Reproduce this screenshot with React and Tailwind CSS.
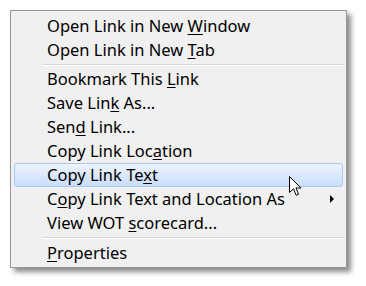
export default function App() {
  const font = { fontFamily: '"Segoe UI", "Noto Sans", "Open Sans", sans-serif' };

  const Item = ({ children, active, submenu }) => (
    <div
      className={`relative mx-[3px] flex h-[24px] items-center rounded-[3px] border pl-[32px] text-[16.5px] text-black ${
        active
          ? 'border-[#a9c8f5] bg-gradient-to-b from-[#eef4fe] to-[#c9ddfb]'
          : 'border-transparent'
      }`}
    >
      <span className="pt-[1px] leading-none">{children}</span>
      {submenu && (
        <span className="absolute right-[8px] top-1/2 h-0 w-0 -translate-y-1/2 border-y-[4px] border-l-[4px] border-y-transparent border-l-black" />
      )}
    </div>
  );

  const Sep = ({ h }) => (
    <div className={`flex items-center pl-[31px] pr-[2px] ${h}`}>
      <div className="h-[2px] w-full border-t border-b border-t-[#d7d7d7] border-b-white" />
    </div>
  );

  const U = ({ children }) => <u className="underline-offset-[2px]">{children}</u>;

  return (
    <div className="h-[286px] w-[366px] bg-white pl-[10px] pt-[10px]" style={font}>
      <div className="relative h-[258px] w-[337px] border border-[#979797] bg-[#f0f0f0] pt-[3px] shadow-[4px_4px_5px_rgba(0,0,0,0.45)]">
        <Item>Open Link in New <U>W</U>indow</Item>
        <Item>Open Link in New <U>T</U>ab</Item>
        <Sep h="h-[5px]" />
        <Item>Bookmark This <U>L</U>ink</Item>
        <Item>Save Lin<U>k</U> As...</Item>
        <Item>Sen<U>d</U> Link...</Item>
        <Item>Copy Link Loc<U>a</U>tion</Item>
        <Item active>Copy Link Te<U>x</U>t</Item>
        <Item submenu>C<U>o</U>py Link Text and Location As</Item>
        <Item>View WOT <U>s</U>corecard...</Item>
        <Sep h="h-[6px]" />
        <Item><U>P</U>roperties</Item>

        <svg
          className="absolute left-[278px] top-[165px]"
          width="13"
          height="21"
          viewBox="0 0 13 21"
        >
          <path
            d="M0.5 0.5 L0.5 16.5 L4.5 12.8 L7.2 19.3 L9.6 18.3 L7 12 L12 12 Z"
            fill="white"
            stroke="black"
            strokeWidth="1"
            strokeLinejoin="miter"
          />
        </svg>
      </div>
    </div>
  );
}
